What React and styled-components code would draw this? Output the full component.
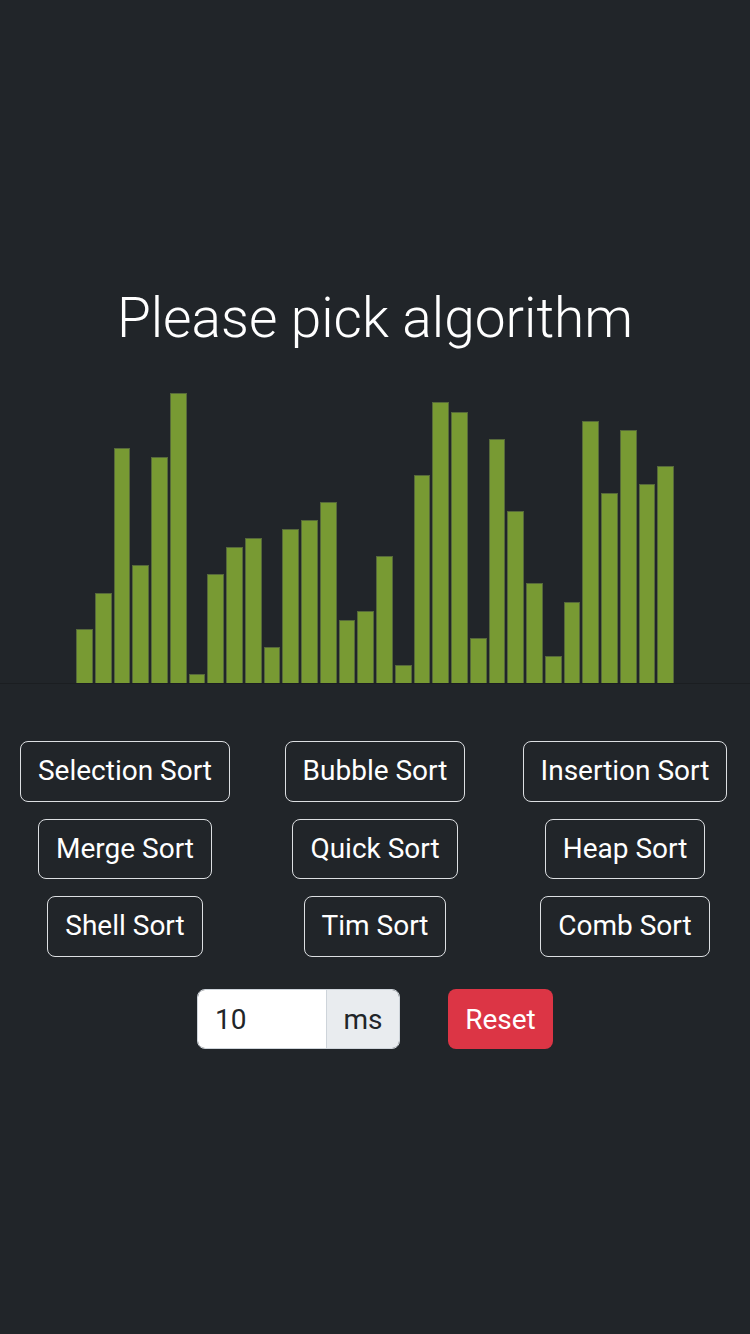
import React from "react";
import styled, { createGlobalStyle } from "styled-components";

const Global = createGlobalStyle`
  html, body { margin: 0; padding: 0; background: #212529; }
  body { font-family: Roboto, "Noto Sans", sans-serif; color: #fff; min-height: 1334px; }
  * { box-sizing: border-box; }
`;

const Page = styled.div`
  min-height: 1334px;
  background: #212529;
  padding-top: 285px;
  display: flex;
  flex-direction: column;
  align-items: center;
`;

const Title = styled.h1`
  margin: 0;
  font-size: 55px;
  font-weight: 300;
  line-height: 1.2;
  color: #fff;
  text-align: center;
`;

const Chart = styled.div`
  width: 750px;
  height: 333px;
  display: flex;
  justify-content: center;
  align-items: flex-end;
  border-bottom: 1px solid rgba(0, 0, 0, 0.18);
`;

const Bars = styled.div`
  width: 600px;
  height: 100%;
  display: flex;
  align-items: flex-end;
`;

const Bar = styled.div`
  flex: 0 0 16.75px;
  margin: 0 1px;
  background: #789a33;
  border: 1px solid #56693a;
  border-bottom: none;
`;

const ButtonGrid = styled.div`
  margin-top: 57px;
  display: grid;
  grid-template-columns: repeat(3, 250px);
  row-gap: 17px;
  justify-items: center;
`;

const AlgoButton = styled.button`
  height: 60.5px;
  padding: 0 17px;
  background: transparent;
  color: #fff;
  border: 1.5px solid #dcdfe2;
  border-radius: 8px;
  font-family: Roboto, "Noto Sans", sans-serif;
  font-size: 28px;
  font-weight: 400;
  line-height: 1;
  cursor: pointer;
`;

const Controls = styled.div`
  margin-top: 32.5px;
  display: flex;
  align-items: center;
  gap: 48px;
`;

const InputGroup = styled.div`
  display: flex;
  height: 60px;
  border: 1.5px solid #ced4da;
  border-radius: 8px;
  overflow: hidden;
`;

const DelayInput = styled.input`
  width: 129px;
  height: 100%;
  border: none;
  border-right: 1.5px solid #ced4da;
  padding: 0 0 0 17px;
  font-family: Roboto, "Noto Sans", sans-serif;
  font-size: 28px;
  color: #212529;
  background: #fff;
  outline: none;
`;

const Addon = styled.span`
  width: 72px;
  display: flex;
  align-items: center;
  justify-content: center;
  background: #e9ecef;
  color: #212529;
  font-size: 28px;
`;

const ResetButton = styled.button`
  height: 60px;
  width: 105px;
  border: none;
  border-radius: 8px;
  background: #dc3545;
  color: #fff;
  font-family: Roboto, "Noto Sans", sans-serif;
  font-size: 28px;
  cursor: pointer;
`;

const values = [6, 10, 26, 13, 25, 32, 1, 12, 15, 16, 4, 17, 18, 20, 7, 8, 14, 2, 23, 31, 30, 5, 27, 19, 11, 3, 9, 29, 21, 28, 22, 24];

const algorithms = [
  "Selection Sort", "Bubble Sort", "Insertion Sort",
  "Merge Sort", "Quick Sort", "Heap Sort",
  "Shell Sort", "Tim Sort", "Comb Sort",
];

export default function App() {
  return (
    <>
      <Global />
      <Page>
        <Title>Please pick algorithm</Title>
        <Chart>
          <Bars>
            {values.map((v, i) => (
              <Bar key={i} style={{ height: `${v * 9.05}px` }} />
            ))}
          </Bars>
        </Chart>
        <ButtonGrid>
          {algorithms.map((a) => (
            <AlgoButton key={a}>{a}</AlgoButton>
          ))}
        </ButtonGrid>
        <Controls>
          <InputGroup>
            <DelayInput defaultValue="10" />
            <Addon>ms</Addon>
          </InputGroup>
          <ResetButton>Reset</ResetButton>
        </Controls>
      </Page>
    </>
  );
}
